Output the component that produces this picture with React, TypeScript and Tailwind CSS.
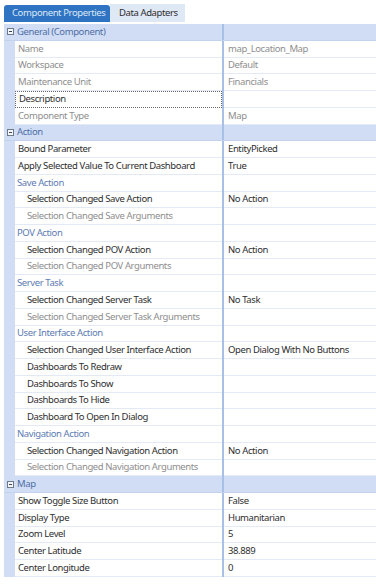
import React from 'react'

type Kind = 'header' | 'sub' | 'prop'

interface Row {
  kind: Kind
  label: string
  value?: string
  nested?: boolean
  muted?: boolean
  focus?: boolean
}

const rows: Row[] = [
  { kind: 'header', label: 'General (Component)' },
  { kind: 'prop', label: 'Name', value: 'map_Location_Map', muted: true },
  { kind: 'prop', label: 'Workspace', value: 'Default', muted: true },
  { kind: 'prop', label: 'Maintenance Unit', value: 'Financials', muted: true },
  { kind: 'prop', label: 'Description', focus: true },
  { kind: 'prop', label: 'Component Type', value: 'Map', muted: true },
  { kind: 'header', label: 'Action' },
  { kind: 'prop', label: 'Bound Parameter', value: 'EntityPicked' },
  { kind: 'prop', label: 'Apply Selected Value To Current Dashboard', value: 'True' },
  { kind: 'sub', label: 'Save Action' },
  { kind: 'prop', label: 'Selection Changed Save Action', value: 'No Action', nested: true },
  { kind: 'prop', label: 'Selection Changed Save Arguments', nested: true, muted: true },
  { kind: 'sub', label: 'POV Action' },
  { kind: 'prop', label: 'Selection Changed POV Action', value: 'No Action', nested: true },
  { kind: 'prop', label: 'Selection Changed POV Arguments', nested: true, muted: true },
  { kind: 'sub', label: 'Server Task' },
  { kind: 'prop', label: 'Selection Changed Server Task', value: 'No Task', nested: true },
  { kind: 'prop', label: 'Selection Changed Server Task Arguments', nested: true, muted: true },
  { kind: 'sub', label: 'User Interface Action' },
  { kind: 'prop', label: 'Selection Changed User Interface Action', value: 'Open Dialog With No Buttons', nested: true },
  { kind: 'prop', label: 'Dashboards To Redraw', nested: true },
  { kind: 'prop', label: 'Dashboards To Show', nested: true },
  { kind: 'prop', label: 'Dashboards To Hide', nested: true },
  { kind: 'prop', label: 'Dashboard To Open In Dialog', nested: true },
  { kind: 'sub', label: 'Navigation Action' },
  { kind: 'prop', label: 'Selection Changed Navigation Action', value: 'No Action', nested: true },
  { kind: 'prop', label: 'Selection Changed Navigation Arguments', nested: true, muted: true },
  { kind: 'header', label: 'Map' },
  { kind: 'prop', label: 'Show Toggle Size Button', value: 'False' },
  { kind: 'prop', label: 'Display Type', value: 'Humanitarian' },
  { kind: 'prop', label: 'Zoom Level', value: '5' },
  { kind: 'prop', label: 'Center Latitude', value: '38.889' },
  { kind: 'prop', label: 'Center Longitude', value: '0' },
]

// collapse box used on category headers
const MinusBox = () => (
  <span className="flex h-[7px] w-[7px] items-center justify-center border border-[#6d7a8c] bg-[#f4f6fa]">
    <span className="h-px w-[3px] bg-[#3c4656]" />
  </span>
)

const GridRow = ({ row }: { row: Row }) => {
  if (row.kind === 'header') {
    return (
      <div className="flex h-[16.76px] items-center border-b border-[#c3d3ee] bg-[#d0ddf4]">
        <div className="flex w-[11px] justify-center pl-px">
          <MinusBox />
        </div>
        <div className="w-[207px] truncate pl-[2px] text-[#4f6ea6]">{row.label}</div>
        <div className="h-full w-[2px] bg-[#a9c0e6]" />
        <div className="flex-1" />
      </div>
    )
  }

  return (
    <div className="flex h-[16.76px]">
      <div className="w-[11px] bg-[#d0ddf4]" />
      <div
        className={`flex w-[207px] items-center overflow-hidden whitespace-nowrap ${
          row.focus ? 'border border-dotted border-[#666]' : 'border-b border-[#e3e9f5]'
        } ${row.kind === 'sub' ? 'pl-[2px] text-[#5d7bb2]' : row.nested ? 'pl-[12px]' : 'pl-[3px]'} ${
          row.kind === 'prop' ? (row.muted ? 'text-[#8e8e8e]' : 'text-[#2e2e2e]') : ''
        }`}
      >
        {row.label}
      </div>
      <div className="w-[2px] bg-[#a9c0e6]" />
      <div
        className={`flex flex-1 items-center border-b border-[#e3e9f5] pl-[4px] ${
          row.muted ? 'text-[#8e8e8e]' : 'text-[#2e2e2e]'
        }`}
      >
        {row.value}
      </div>
    </div>
  )
}

export default function App() {
  return (
    <div
      className="h-[584px] w-[376px] overflow-hidden bg-white text-[9.5px] tracking-[-0.4px]"
      style={{ fontFamily: '"Noto Sans", "Open Sans", sans-serif' }}
    >
      {/* Tabs */}
      <div className="flex items-end pl-[4px] pt-[4px]">
        <div className="flex h-[17px] w-[106px] items-center whitespace-nowrap rounded-t-[3px] bg-[#2f74c2] pl-[8px] text-[#dbe7f6]">
          Component Properties
        </div>
        <div className="flex h-[18px] w-[75px] items-center whitespace-nowrap bg-[#dfe8f5] pl-[9px] text-[#2e2e2e]">
          Data Adapters
        </div>
      </div>

      {/* Property grid */}
      <div className="ml-[4px] mt-[2px]">
        {rows.map((row, i) => (
          <GridRow key={i} row={row} />
        ))}
      </div>
    </div>
  )
}
